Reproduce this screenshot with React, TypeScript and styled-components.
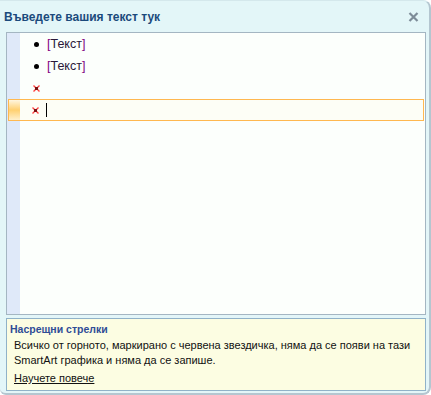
import React from "react";
import styled, { createGlobalStyle } from "styled-components";

const GlobalStyle = createGlobalStyle`
  html, body {
    margin: 0;
    padding: 0;
    background: #ffffff;
  }
  body {
    font-family: "Liberation Sans", Arial, sans-serif;
  }
`;

const Window = styled.div`
  box-sizing: border-box;
  width: 431px;
  height: 395px;
  background: #e3f6f8;
  border-right: 2px solid #b4c6d0;
  border-bottom: 2px solid #b4c6d0;
  border-top: 1px solid #d4e8ec;
  border-radius: 0 8px 8px 6px;
  display: flex;
  flex-direction: column;
`;

const TitleBar = styled.div`
  height: 31px;
  display: flex;
  align-items: center;
  justify-content: space-between;
  padding: 0 8px 0 4px;
`;

const Title = styled.div`
  font-weight: bold;
  font-size: 12px;
  color: #1b4a7c;
`;

const CloseButton = styled.div`
  width: 12px;
  height: 12px;
  display: flex;
  align-items: center;
  justify-content: center;
  margin-right: 2px;
`;

const Editor = styled.div`
  height: 281px;
  margin: 0 3px 0 6px;
  border: 1px solid #a4b6c2;
  background: linear-gradient(to right, #dfe9f9 13px, #fcfffc 13px);
  display: flex;
  flex-direction: column;
`;

const Row = styled.div<{ selected?: boolean }>`
  box-sizing: border-box;
  height: 22px;
  display: flex;
  align-items: center;
  margin: ${(p) => (p.selected ? "0 1px 0 1px" : "0")};
  border: ${(p) => (p.selected ? "1px solid #ffb850" : "none")};
  background: ${(p) =>
    p.selected
      ? "linear-gradient(to bottom, #fff6e0, #ffd070 50%, #fff0cc)"
      : "transparent"};
`;

const Gutter = styled.div<{ selected?: boolean }>`
  width: ${(p) => (p.selected ? "11px" : "13px")};
  align-self: stretch;
  flex: none;
`;

const RowBody = styled.div<{ selected?: boolean }>`
  flex: 1;
  align-self: stretch;
  display: flex;
  align-items: center;
  padding-left: ${(p) => (p.selected ? "12px" : "13px")};
  background: ${(p) => (p.selected ? "#fdfef6" : "transparent")};
`;

const Marker = styled.div`
  width: 7px;
  height: 7px;
  display: flex;
  align-items: center;
  justify-content: center;
  margin-right: 7px;
  flex: none;
`;

const Bullet = styled.div`
  width: 5px;
  height: 5px;
  border-radius: 50%;
  background: #000;
`;

const Placeholder = styled.span`
  font-size: 12.5px;
  color: #2a1838;
  b {
    font-weight: normal;
    color: #800080;
  }
`;

const Caret = styled.div`
  width: 1px;
  height: 14px;
  background: #000;
`;

const Info = styled.div`
  margin: 3px 3px 0 6px;
  height: 68px;
  border: 1px solid #90b2c8;
  background: #fcfde2;
  padding: 3px 0 0 3px;
  display: flex;
  flex-direction: column;
`;

const InfoTitle = styled.div`
  font-weight: bold;
  font-size: 10.5px;
  color: #2f4c96;
  line-height: 15px;
  margin-bottom: 1px;
`;

const InfoText = styled.div`
  font-size: 11px;
  color: #111;
  line-height: 15px;
  padding-left: 4px;
  white-space: nowrap;
`;

const InfoLink = styled.a`
  display: inline-block;
  font-size: 11px;
  color: #111;
  line-height: 15px;
  text-decoration: underline;
  margin: 1px 0 0 4px;
`;

const RedMark = () => (
  <svg width="7" height="7" viewBox="0 0 7 7">
    <path d="M0.5 0.5 L6.5 6.5 M6.5 0.5 L0.5 6.5" stroke="#ff4040" strokeWidth="1.4" />
    <rect x="2" y="2" width="3" height="3" fill="#7a1010" />
  </svg>
);

const CloseIcon = () => (
  <svg width="11" height="10" viewBox="0 0 11 10">
    <path d="M1.5 1 L9.5 9 M9.5 1 L1.5 9" stroke="#7d8c98" strokeWidth="2.2" />
  </svg>
);

const items = [
  { kind: "bullet", text: "Текст" },
  { kind: "bullet", text: "Текст" },
  { kind: "empty" },
  { kind: "current" },
];

export default function App() {
  return (
    <>
      <GlobalStyle />
      <Window>
        <TitleBar>
          <Title>Въведете вашия текст тук</Title>
          <CloseButton>
            <CloseIcon />
          </CloseButton>
        </TitleBar>
        <Editor>
          {items.map((it, i) => {
            const selected = it.kind === "current";
            return (
              <Row key={i} selected={selected}>
                <Gutter selected={selected} />
                <RowBody selected={selected}>
                  <Marker>{it.kind === "bullet" ? <Bullet /> : <RedMark />}</Marker>
                  {it.kind === "bullet" && (
                    <Placeholder>
                      <b>[</b>
                      {it.text}
                      <b>]</b>
                    </Placeholder>
                  )}
                  {selected && <Caret />}
                </RowBody>
              </Row>
            );
          })}
        </Editor>
        <Info>
          <InfoTitle>Насрещни стрелки</InfoTitle>
          <InfoText>
            Всичко от горното, маркирано с червена звездичка, няма да се появи на тази
            <br />
            SmartArt графика и няма да се запише.
          </InfoText>
          <div>
            <InfoLink href="#">Научете повече</InfoLink>
          </div>
        </Info>
      </Window>
    </>
  );
}
